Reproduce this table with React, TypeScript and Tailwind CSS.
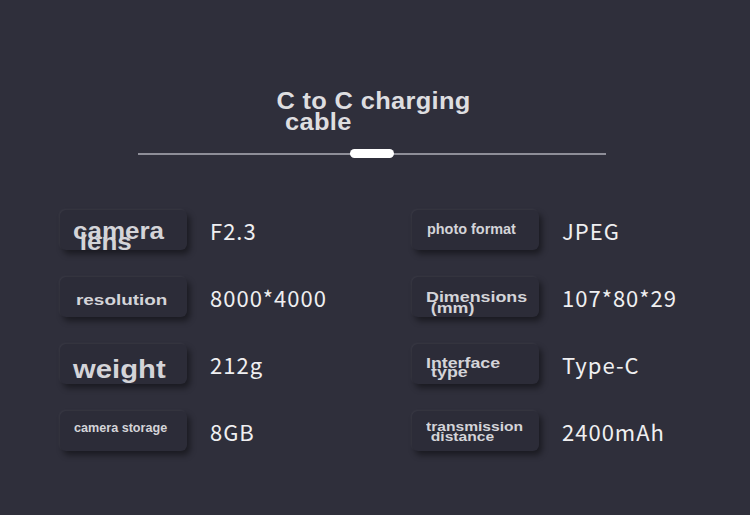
import type { ReactNode } from "react";

const arial = { fontFamily: '"Liberation Sans", Arial, sans-serif' };
const noto = { fontFamily: '"Noto Sans CJK SC", "Noto Sans", sans-serif' };

const LabelBox = ({ children }: { children: ReactNode }) => (
    <div
        className="relative w-[127px] h-[40px] shrink-0 rounded-[6px] bg-[#2c2c38] shadow-[3px_4px_6px_rgba(0,0,0,0.45),-1px_-1px_2px_rgba(255,255,255,0.05)] font-bold text-[#d4d4d8] whitespace-nowrap"
        style={arial}
    >
        {children}
    </div>
);

const Row = ({ label, value }: { label: ReactNode; value: string }) => (
    <div className="flex items-center gap-[23px]">
        <LabelBox>{label}</LabelBox>
        <span className="text-[22px] tracking-[1px] text-[#efeff1]" style={noto}>
            {value}
        </span>
    </div>
);

export default function App() {
    return (
        <div className="w-[750px] h-[515px] bg-[#2f2f3b] overflow-hidden">
            <div className="flex justify-center pt-[90px] pr-[2px]">
                <div
                    className="font-bold text-[24px] leading-[21px] tracking-[0.3px] text-[#dedee0] scale-x-[1.06]"
                    style={arial}
                >
                    <div>C to C charging</div>
                    <div className="pl-[8px]">cable</div>
                </div>
            </div>

            <div className="relative ml-[138px] w-[468px] h-[9px] mt-[17px] flex items-center justify-center">
                <div className="absolute inset-x-0 top-[4px] h-[1.5px] bg-[#8e8e98]" />
                <div className="relative w-[44px] h-[9px] rounded-full bg-white" />
            </div>

            <div className="grid grid-cols-[352px_1fr] gap-y-[27px] pl-[60px] mt-[52px]">
                <Row
                    value="F2.3"
                    label={
                        <div className="flex pt-[16px] pl-[13px]">
                            <div className="origin-left scale-x-[1.13] text-[23px] leading-[11px]">
                                <div>camera</div>
                                <div className="pl-[6px]">lens</div>
                            </div>
                        </div>
                    }
                />
                <Row
                    value="JPEG"
                    label={
                        <div className="flex pt-[12px] pl-[15px]">
                            <div className="origin-left scale-x-[1.03] text-[14px] leading-[14px]">
                                photo format
                            </div>
                        </div>
                    }
                />
                <Row
                    value="8000*4000"
                    label={
                        <div className="flex pt-[15px] pl-[16px]">
                            <div className="origin-left scale-x-[1.26] text-[15px] leading-[15px]">
                                resolution
                            </div>
                        </div>
                    }
                />
                <Row
                    value="107*80*29"
                    label={
                        <div className="flex pt-[14px] pl-[14px]">
                            <div className="origin-left scale-x-[1.19] text-[15px] leading-[11px]">
                                <div>Dimensions</div>
                                <div className="pl-[4px]">(mm)</div>
                            </div>
                        </div>
                    }
                />
                <Row
                    value="212g"
                    label={
                        <div className="flex pt-[13px] pl-[13px]">
                            <div className="origin-left scale-x-[1.17] text-[25px] leading-[25px]">
                                weight
                            </div>
                        </div>
                    }
                />
                <Row
                    value="Type-C"
                    label={
                        <div className="flex pt-[15px] pl-[14px]">
                            <div className="origin-left scale-x-[1.27] text-[14px] leading-[9px]">
                                <div>Interface</div>
                                <div className="pl-[4px]">type</div>
                            </div>
                        </div>
                    }
                />
                <Row
                    value="8GB"
                    label={
                        <div className="flex pt-[11px] pl-[14px]">
                            <div className="origin-left scale-x-[1.05] text-[12px] leading-[12px]">
                                camera storage
                            </div>
                        </div>
                    }
                />
                <Row
                    value="2400mAh"
                    label={
                        <div className="flex pt-[11px] pl-[14px]">
                            <div className="origin-left scale-x-[1.2] text-[13px] leading-[10px]">
                                <div>transmission</div>
                                <div className="pl-[4px]">distance</div>
                            </div>
                        </div>
                    }
                />
            </div>
        </div>
    );
}
